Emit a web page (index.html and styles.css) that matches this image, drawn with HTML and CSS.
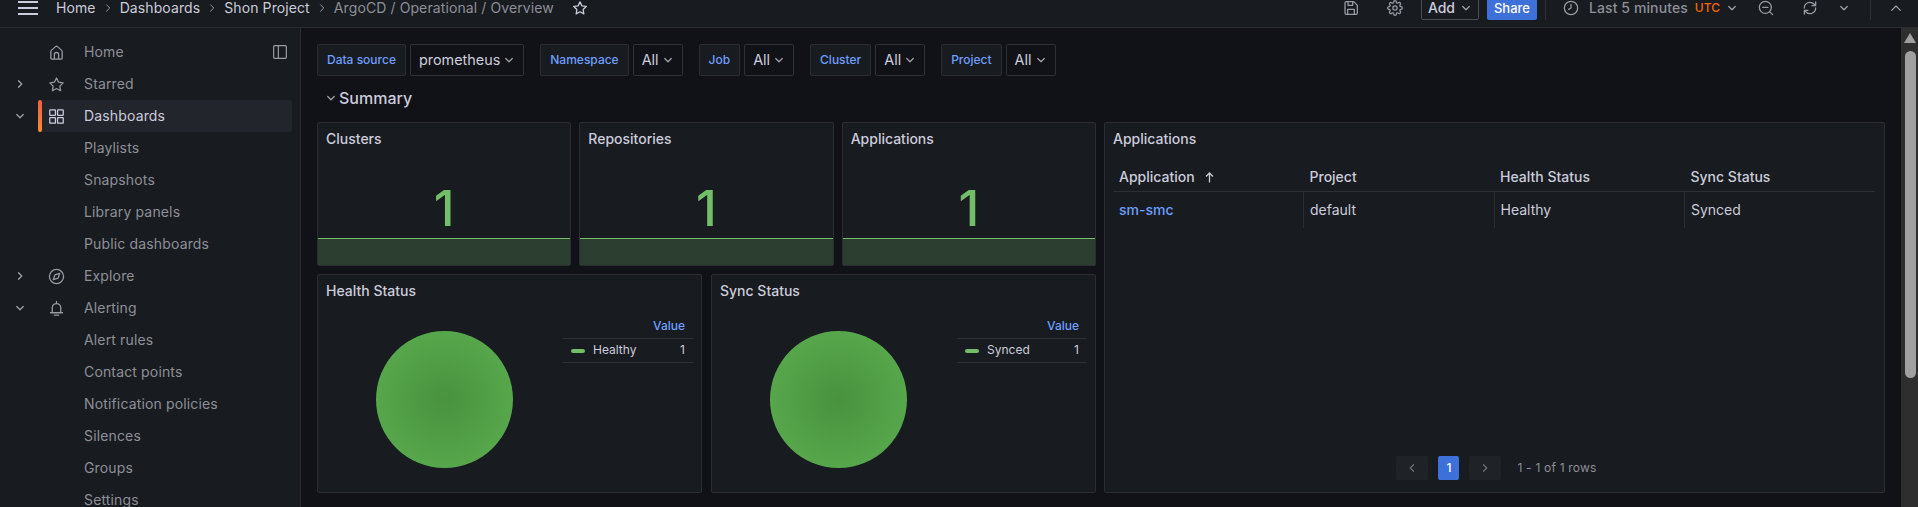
FILE: index.html
```html
<!DOCTYPE html>
<html lang="en">
<head>
    <meta charset="UTF-8">
    <meta name="viewport" content="width=device-width, initial-scale=1.0">
    <title>ArgoCD / Operational / Overview</title>
    <link rel="stylesheet" href="styles.css">
</head>
<body>
    <svg class="sprite" aria-hidden="true">
        <symbol id="i-home" viewBox="0 0 24 24"><path d="M4 20V10.5a2 2 0 0 1 .7-1.5l6-5.3a2 2 0 0 1 2.6 0l6 5.3a2 2 0 0 1 .7 1.5V20a1.5 1.5 0 0 1-1.5 1.5h-13A1.5 1.5 0 0 1 4 20zM9 21.5V15a3 3 0 0 1 6 0v6.5"/></symbol>
        <symbol id="i-star" viewBox="0 0 24 24"><path d="M12 2.8l2.9 6 6.5.9-4.7 4.6 1.1 6.5-5.8-3.1-5.8 3.1 1.1-6.5-4.7-4.6 6.5-.9z"/></symbol>
        <symbol id="i-apps" viewBox="0 0 24 24"><rect x="2.5" y="2.5" width="8" height="8" rx=".8"/><rect x="13.5" y="2.5" width="8" height="8" rx=".8"/><rect x="2.5" y="13.5" width="8" height="8" rx=".8"/><rect x="13.5" y="13.5" width="8" height="8" rx=".8"/></symbol>
        <symbol id="i-compass" viewBox="0 0 24 24"><circle cx="12" cy="12" r="10"/><path d="M16.5 7.5l-2.2 6.8-6.8 2.2 2.2-6.8z"/></symbol>
        <symbol id="i-bell" viewBox="0 0 24 24"><path d="M12 2v2.5M6 18v-7a6 6 0 0 1 12 0v7M3.5 18h17M9 21.5h6"/></symbol>
        <symbol id="i-dock" viewBox="0 0 24 24"><rect x="2.5" y="2.5" width="19" height="19" rx="1.5"/><path d="M9.5 2.5v19"/></symbol>
        <symbol id="i-save" viewBox="0 0 24 24"><path d="M5 2.5h11l5.5 5.5v11.5a2 2 0 0 1-2 2h-14.500a2 2 0 0 1-2-2v-15a2 2 0 0 1 2-2zM7.500 2.500v5.500h7v-5.500M7 21.500v-7.500h10v7.500"/></symbol>
        <symbol id="i-gear" viewBox="0 0 24 24"><circle cx="12" cy="12" r="3.200"/><path d="M19.400 15a1.650 1.650 0 0 0 .33 1.820l.06.06a2 2 0 0 1 0 2.830 2 2 0 0 1-2.830 0l-.06-.06a1.650 1.650 0 0 0-1.820-.33 1.650 1.650 0 0 0-1 1.510V21a2 2 0 0 1-2 2 2 2 0 0 1-2-2v-.09A1.650 1.650 0 0 0 9 19.400a1.650 1.650 0 0 0-1.820.33l-.06.06a2 2 0 0 1-2.830 0 2 2 0 0 1 0-2.830l.06-.06a1.650 1.650 0 0 0 .33-1.820 1.650 1.650 0 0 0-1.510-1H3a2 2 0 0 1-2-2 2 2 0 0 1 2-2h.09A1.650 1.650 0 0 0 4.600 9a1.650 1.650 0 0 0-.33-1.820l-.06-.06a2 2 0 0 1 0-2.830 2 2 0 0 1 2.830 0l.06.06a1.650 1.650 0 0 0 1.820.33H9a1.650 1.650 0 0 0 1-1.510V3a2 2 0 0 1 2-2 2 2 0 0 1 2 2v.09a1.650 1.650 0 0 0 1 1.510 1.650 1.650 0 0 0 1.820-.33l.06-.06a2 2 0 0 1 2.830 0 2 2 0 0 1 0 2.830l-.06.06a1.650 1.650 0 0 0-.33 1.820V9a1.650 1.650 0 0 0 1.510 1H21a2 2 0 0 1 2 2 2 2 0 0 1-2 2h-.09a1.650 1.650 0 0 0-1.510 1z"/></symbol>
        <symbol id="i-clock" viewBox="0 0 24 24"><circle cx="12" cy="12" r="10"/><path d="M12 6.500v5.500l-3.500 2"/></symbol>
        <symbol id="i-zoom" viewBox="0 0 24 24"><circle cx="11" cy="11" r="9"/><path d="M17.500 17.500L22 22M7 11h8"/></symbol>
        <symbol id="i-sync" viewBox="0 0 24 24"><path d="M3.500 12a8.500 8.500 0 0 1 14.500-6l2.500 2.500M20.500 3v5.500H15M20.500 12a8.500 8.500 0 0 1-14.500 6l-2.500-2.500M3.500 21v-5.500H9"/></symbol>
        <symbol id="i-right" viewBox="0 0 24 24"><path d="M9 5.500l6.500 6.500L9 18.500"/></symbol>
        <symbol id="i-left" viewBox="0 0 24 24"><path d="M15 5.500L8.500 12l6.500 6.500"/></symbol>
        <symbol id="i-down" viewBox="0 0 24 24"><path d="M5.500 9l6.500 6.500L18.500 9"/></symbol>
        <symbol id="i-up" viewBox="0 0 24 24"><path d="M5.500 15.500L12 9l6.500 6.500"/></symbol>
    </svg>

    <header class="topbar">
        <div class="menu-btn"><span></span><span></span><span></span></div>
        <nav class="crumbs">
            <span>Home</span>
            <svg class="chev crumb-chev"><use href="#i-right"/></svg>
            <span>Dashboards</span>
            <svg class="chev crumb-chev"><use href="#i-right"/></svg>
            <span>Shon Project</span>
            <svg class="chev crumb-chev"><use href="#i-right"/></svg>
            <span class="crumb-last">ArgoCD / Operational / Overview</span>
            <svg class="icon crumb-star"><use href="#i-star"/></svg>
        </nav>
        <div class="toolbar">
            <svg class="icon tool-save"><use href="#i-save"/></svg>
            <svg class="icon tool-gear"><use href="#i-gear"/></svg>
            <div class="btn-add">Add <svg class="chev"><use href="#i-down"/></svg></div>
            <div class="btn-share">Share</div>
            <div class="divider divider-a"></div>
            <svg class="icon tool-clock"><use href="#i-clock"/></svg>
            <span class="time-range">Last 5 minutes</span>
            <span class="time-zone">UTC</span>
            <svg class="chev tool-chev"><use href="#i-down"/></svg>
            <svg class="icon tool-zoom"><use href="#i-zoom"/></svg>
            <svg class="icon tool-sync"><use href="#i-sync"/></svg>
            <svg class="chev tool-chev2"><use href="#i-down"/></svg>
            <div class="divider divider-b"></div>
            <svg class="icon tool-up"><use href="#i-up"/></svg>
        </div>
    </header>

    <div class="page">
        <aside class="sidebar">
            <div class="nav-row">
                <div class="nav-toggle"></div>
                <div class="nav-link">
                    <svg class="icon"><use href="#i-home"/></svg>
                    <span>Home</span>
                    <svg class="icon dock-icon"><use href="#i-dock"/></svg>
                </div>
            </div>
            <div class="nav-row">
                <div class="nav-toggle"><svg class="chev"><use href="#i-right"/></svg></div>
                <div class="nav-link"><svg class="icon"><use href="#i-star"/></svg><span>Starred</span></div>
            </div>
            <div class="nav-row active">
                <div class="nav-toggle"><svg class="chev"><use href="#i-down"/></svg></div>
                <div class="nav-link"><svg class="icon"><use href="#i-apps"/></svg><span>Dashboards</span></div>
            </div>
            <div class="nav-row sub"><div class="nav-link"><span>Playlists</span></div></div>
            <div class="nav-row sub"><div class="nav-link"><span>Snapshots</span></div></div>
            <div class="nav-row sub"><div class="nav-link"><span>Library panels</span></div></div>
            <div class="nav-row sub"><div class="nav-link"><span>Public dashboards</span></div></div>
            <div class="nav-row">
                <div class="nav-toggle"><svg class="chev"><use href="#i-right"/></svg></div>
                <div class="nav-link"><svg class="icon"><use href="#i-compass"/></svg><span>Explore</span></div>
            </div>
            <div class="nav-row">
                <div class="nav-toggle"><svg class="chev"><use href="#i-down"/></svg></div>
                <div class="nav-link"><svg class="icon"><use href="#i-bell"/></svg><span>Alerting</span></div>
            </div>
            <div class="nav-row sub"><div class="nav-link"><span>Alert rules</span></div></div>
            <div class="nav-row sub"><div class="nav-link"><span>Contact points</span></div></div>
            <div class="nav-row sub"><div class="nav-link"><span>Notification policies</span></div></div>
            <div class="nav-row sub"><div class="nav-link"><span>Silences</span></div></div>
            <div class="nav-row sub"><div class="nav-link"><span>Groups</span></div></div>
            <div class="nav-row sub"><div class="nav-link"><span>Settings</span></div></div>
        </aside>

        <main class="main">
            <div class="vars">
                <div class="var"><label>Data source</label><div class="var-value">prometheus <svg class="chev"><use href="#i-down"/></svg></div></div>
                <div class="var"><label>Namespace</label><div class="var-value">All <svg class="chev"><use href="#i-down"/></svg></div></div>
                <div class="var"><label>Job</label><div class="var-value">All <svg class="chev"><use href="#i-down"/></svg></div></div>
                <div class="var"><label>Cluster</label><div class="var-value">All <svg class="chev"><use href="#i-down"/></svg></div></div>
                <div class="var"><label>Project</label><div class="var-value">All <svg class="chev"><use href="#i-down"/></svg></div></div>
            </div>

            <div class="row-title"><svg class="chev"><use href="#i-down"/></svg>Summary</div>

            <div class="dash">
                <div class="dash-left">
                    <div class="stats">
                        <section class="panel stat">
                            <h2>Clusters</h2>
                            <div class="stat-value">1</div>
                            <div class="stat-spark"></div>
                        </section>
                        <section class="panel stat">
                            <h2>Repositories</h2>
                            <div class="stat-value">1</div>
                            <div class="stat-spark"></div>
                        </section>
                        <section class="panel stat">
                            <h2>Applications</h2>
                            <div class="stat-value">1</div>
                            <div class="stat-spark"></div>
                        </section>
                    </div>
                    <div class="pies">
                        <section class="panel">
                            <h2>Health Status</h2>
                            <div class="pie-body">
                                <div class="pie-chart"><div class="pie"></div></div>
                                <table class="legend">
                                    <tr><th colspan="2">Value</th></tr>
                                    <tr><td><i class="swatch"></i>Healthy</td><td class="num">1</td></tr>
                                </table>
                            </div>
                        </section>
                        <section class="panel">
                            <h2>Sync Status</h2>
                            <div class="pie-body">
                                <div class="pie-chart"><div class="pie"></div></div>
                                <table class="legend">
                                    <tr><th colspan="2">Value</th></tr>
                                    <tr><td><i class="swatch"></i>Synced</td><td class="num">1</td></tr>
                                </table>
                            </div>
                        </section>
                    </div>
                </div>

                <section class="panel apps">
                    <h2>Applications</h2>
                    <table class="apps-table">
                        <thead>
                            <tr>
                                <th>Application <svg class="sort-arrow" viewBox="0 0 12 12"><path d="M6 10.500V2M2.800 5L6 1.800 9.200 5"/></svg></th>
                                <th>Project</th>
                                <th>Health Status</th>
                                <th>Sync Status</th>
                            </tr>
                        </thead>
                        <tbody>
                            <tr>
                                <td class="link">sm-smc</td>
                                <td>default</td>
                                <td>Healthy</td>
                                <td>Synced</td>
                            </tr>
                        </tbody>
                    </table>
                    <div class="pager">
                        <div class="page-btn"><svg class="chev"><use href="#i-left"/></svg></div>
                        <div class="page-num">1</div>
                        <div class="page-btn"><svg class="chev"><use href="#i-right"/></svg></div>
                        <span class="page-info">1 - 1 of 1 rows</span>
                    </div>
                </section>
            </div>
        </main>

        <div class="scrollbar">
            <div class="scroll-arrow"></div>
            <div class="scroll-thumb"></div>
        </div>
    </div>
</body>
</html>
```

FILE: styles.css
```css
* {
    box-sizing: border-box;
}
html, body {
    height: 100%;
}
body {
    margin: 0;
    overflow: hidden;
    display: flex;
    flex-direction: column;
    background-color: #111217;
    color: #ccccdc;
    font-family: Inter, "Liberation Sans", sans-serif;
    font-size: 14px;
    line-height: 16px;
}
.sprite {
    display: none;
}
.icon {
    width: 16px;
    height: 16px;
    flex: none;
    fill: none;
    stroke: #9a9ba4;
    stroke-width: 1.9;
    stroke-linejoin: round;
    stroke-linecap: round;
}
.chev {
    width: 12px;
    height: 12px;
    flex: none;
    fill: none;
    stroke: #a3a4ad;
    stroke-width: 2.4;
    stroke-linejoin: round;
    stroke-linecap: round;
}

/* top bar, scrolled a little out of the window */
.topbar {
    flex: none;
    height: 40px;
    margin-top: -12px;
    display: flex;
    align-items: center;
    background-color: #181b1f;
    border-bottom: 1px solid #2a2c31;
}
.menu-btn {
    width: 20px;
    margin-left: 18px;
    display: flex;
    flex-direction: column;
    gap: 4px;
}
.menu-btn span {
    height: 2px;
    background-color: #ccccdc;
}
.crumbs {
    display: flex;
    align-items: center;
    margin-left: 18px;
    letter-spacing: .1px;
}
.crumb-chev {
    margin: 0 6px;
    stroke-width: 1.8;
}
.crumb-last {
    color: #8e8f99;
}
.crumb-star {
    margin-left: 18px;
    stroke: #ccccdc;
}
.toolbar {
    margin-left: auto;
    display: flex;
    align-items: center;
    padding-right: 14px;
}
.tool-gear {
    margin-left: 28px;
}
.btn-add {
    margin-left: 18px;
    height: 24px;
    width: 58px;
    display: flex;
    align-items: center;
    justify-content: center;
    gap: 5px;
    border: 1px solid #4a4c52;
    border-radius: 2px;
    font-weight: 500;
}
.btn-share {
    margin-left: 8px;
    height: 24px;
    width: 50px;
    display: flex;
    align-items: center;
    justify-content: center;
    background-color: #3d71d9;
    border-radius: 2px;
    color: #fff;
    font-size: 13px;
    font-weight: 500;
}
.divider {
    width: 1px;
    height: 24px;
    background-color: #2e3036;
}
.divider-a {
    margin-left: 8px;
}
.divider-b {
    margin-left: 20px;
}
.tool-clock {
    margin-left: 17px;
}
.time-range {
    margin-left: 10px;
    color: #8e8f99;
    font-weight: 500;
    letter-spacing: .1px;
}
.time-zone {
    margin-left: 7px;
    color: #f46800;
    font-size: 12px;
    font-weight: 500;
}
.tool-chev {
    margin-left: 6px;
}
.tool-zoom {
    margin-left: 20px;
}
.tool-sync {
    margin-left: 28px;
}
.tool-chev2 {
    margin-left: 20px;
}
.tool-up {
    margin-left: 17px;
}

/* page */
.page {
    flex: 1;
    min-height: 0;
    display: flex;
}

/* sidebar */
.sidebar {
    flex: none;
    width: 301px;
    padding: 8px 8px 0 0;
    background-color: #181b1f;
    border-right: 1px solid #2a2c31;
    overflow: hidden;
    color: #8e8f99;
    letter-spacing: .15px;
}
.sidebar .icon {
    width: 17px;
    height: 17px;
    stroke-width: 1.8;
}
.nav-row {
    height: 32px;
    flex: none;
    display: flex;
}
.nav-toggle {
    width: 38px;
    padding-left: 2px;
    display: flex;
    align-items: center;
    justify-content: center;
}
.nav-link {
    flex: 1;
    display: flex;
    align-items: center;
    gap: 19px;
    padding-left: 10px;
    border-radius: 2px;
}
.sidebar .dock-icon {
    width: 16px;
    height: 16px;
    margin-left: auto;
    margin-right: 4px;
}
.nav-row.sub .nav-link {
    padding-left: 84px;
}
.nav-row.active .nav-link {
    position: relative;
    background-color: #22252b;
    color: #ccccdc;
    padding-left: 10px;
}
.nav-row.active .nav-link::before {
    content: "";
    position: absolute;
    left: 0;
    top: 0;
    bottom: 0;
    width: 4px;
    border-radius: 2px;
    background-image: linear-gradient(#f55f3e, #ff8833);
}
.nav-row.active .icon {
    stroke: #ccccdc;
}

/* main area */
.main {
    flex: 1;
    min-width: 0;
    padding: 16px 16px 0;
    overflow: hidden;
}
.vars {
    display: flex;
    gap: 16px;
}
.var {
    display: flex;
    gap: 4px;
}
.var label {
    height: 32px;
    padding: 0 9px;
    display: flex;
    align-items: center;
    background-color: #181b1f;
    border: 1px solid #2b2d33;
    border-radius: 2px;
    color: #6e9fff;
    font-size: 12px;
    font-weight: 500;
}
.var-value {
    height: 32px;
    padding: 0 8px;
    display: flex;
    align-items: center;
    gap: 3px;
    background-color: #111217;
    border: 1px solid #2f3137;
    border-radius: 2px;
    font-size: 14.4px;
}
.row-title {
    margin: 10px 0 12px;
    padding-left: 8px;
    display: flex;
    align-items: center;
    gap: 2px;
    font-size: 16px;
    font-weight: 500;
    line-height: 24px;
}

/* dashboard grid */
.dash {
    display: flex;
    gap: 8px;
    height: 371px;
}
.dash-left {
    flex: 1;
    min-width: 0;
    display: flex;
    flex-direction: column;
    gap: 8px;
}
.stats {
    display: flex;
    gap: 8px;
    height: 144px;
}
.pies {
    display: flex;
    gap: 9px;
    flex: 1;
}
.panel {
    flex: 1;
    min-width: 0;
    display: flex;
    flex-direction: column;
    background-color: #181b1f;
    border: 1px solid #2a2d32;
    border-radius: 2px;
}
.panel h2 {
    margin: 0;
    padding: 8px 8px 0;
    font-size: 14px;
    font-weight: 500;
    line-height: 16px;
}

/* stat panels */
.stat-value {
    flex: 1;
    padding-bottom: 5px;
    display: flex;
    align-items: flex-end;
    justify-content: center;
    color: #73bf69;
    font-size: 50px;
    font-weight: 500;
    line-height: 50px;
}
.stat-spark {
    height: 27px;
    background-color: #2c3e2f;
    border-top: 1px solid #73bf69;
}

/* pie panels */
.pie-body {
    flex: 1;
    display: flex;
    padding-right: 8px;
}
.pie-chart {
    flex: 1;
    padding: 32px 0 0 8px;
    display: flex;
    justify-content: center;
}
.pie {
    width: 137px;
    height: 137px;
    border-radius: 50%;
    background-image: radial-gradient(circle, #49923f 0%, #56a64b 70%);
}
.legend {
    width: 130px;
    height: 47px;
    margin-top: 16px;
    border-collapse: collapse;
    font-size: 12px;
}
.legend th {
    height: 23px;
    padding: 0 8px;
    text-align: right;
    color: #6e9fff;
    font-weight: 500;
    border-bottom: 1px solid #2e3036;
}
.legend td {
    height: 24px;
    padding: 0 0 0 8px;
    border-bottom: 1px solid #2e3036;
}
.legend td.num {
    padding: 0 8px 0 0;
    text-align: right;
}
.swatch {
    display: inline-block;
    width: 14px;
    height: 4px;
    margin-right: 8px;
    vertical-align: middle;
    background-color: #73bf69;
    border-radius: 2px;
}

/* applications table */
.apps {
    flex: 1;
}
.apps-table {
    width: 762px;
    margin: 16px 8px 0 8px;
    border-collapse: collapse;
    table-layout: fixed;
}
.apps-table th {
    height: 28px;
    padding: 0 6px;
    text-align: left;
    font-weight: 500;
    border-bottom: 1px solid #2e3036;
}
.apps-table td {
    height: 37px;
    padding: 0 6px;
    border-right: 1px solid #2a2d32;
}
.apps-table td:last-child {
    border-right: none;
}
.apps-table .link {
    color: #6e9fff;
    font-weight: 500;
}
.sort-arrow {
    width: 13px;
    height: 13px;
    margin-left: 5px;
    vertical-align: -2px;
    fill: none;
    stroke: #ccccdc;
    stroke-width: 1.2;
}
.pager {
    margin-top: auto;
    margin-bottom: 12px;
    padding-left: 4px;
    display: flex;
    align-items: center;
    justify-content: center;
    gap: 10px;
}
.page-btn {
    width: 32px;
    height: 24px;
    display: flex;
    align-items: center;
    justify-content: center;
    background-color: #1f2227;
    border-radius: 2px;
}
.page-btn .chev {
    stroke: #6f7077;
}
.page-num {
    width: 21px;
    height: 24px;
    display: flex;
    align-items: center;
    justify-content: center;
    background-color: #3d71d9;
    border-radius: 2px;
    color: #fff;
    font-size: 12px;
    font-weight: 500;
}
.page-info {
    margin-left: 6px;
    color: #8e8f99;
    font-size: 12px;
    letter-spacing: .2px;
}

/* browser scrollbar */
.scrollbar {
    flex: none;
    width: 17px;
    padding: 5px 2px 0 4px;
    background-color: #2e2e2e;
}
.scroll-arrow {
    width: 0;
    margin-left: -1px;
    border-left: 6.5px solid transparent;
    border-right: 6.5px solid transparent;
    border-bottom: 10px solid #a0a0a0;
}
.scroll-thumb {
    height: 327px;
    margin-top: 8px;
    background-color: #a0a0a0;
    border-radius: 6px;
}
```
